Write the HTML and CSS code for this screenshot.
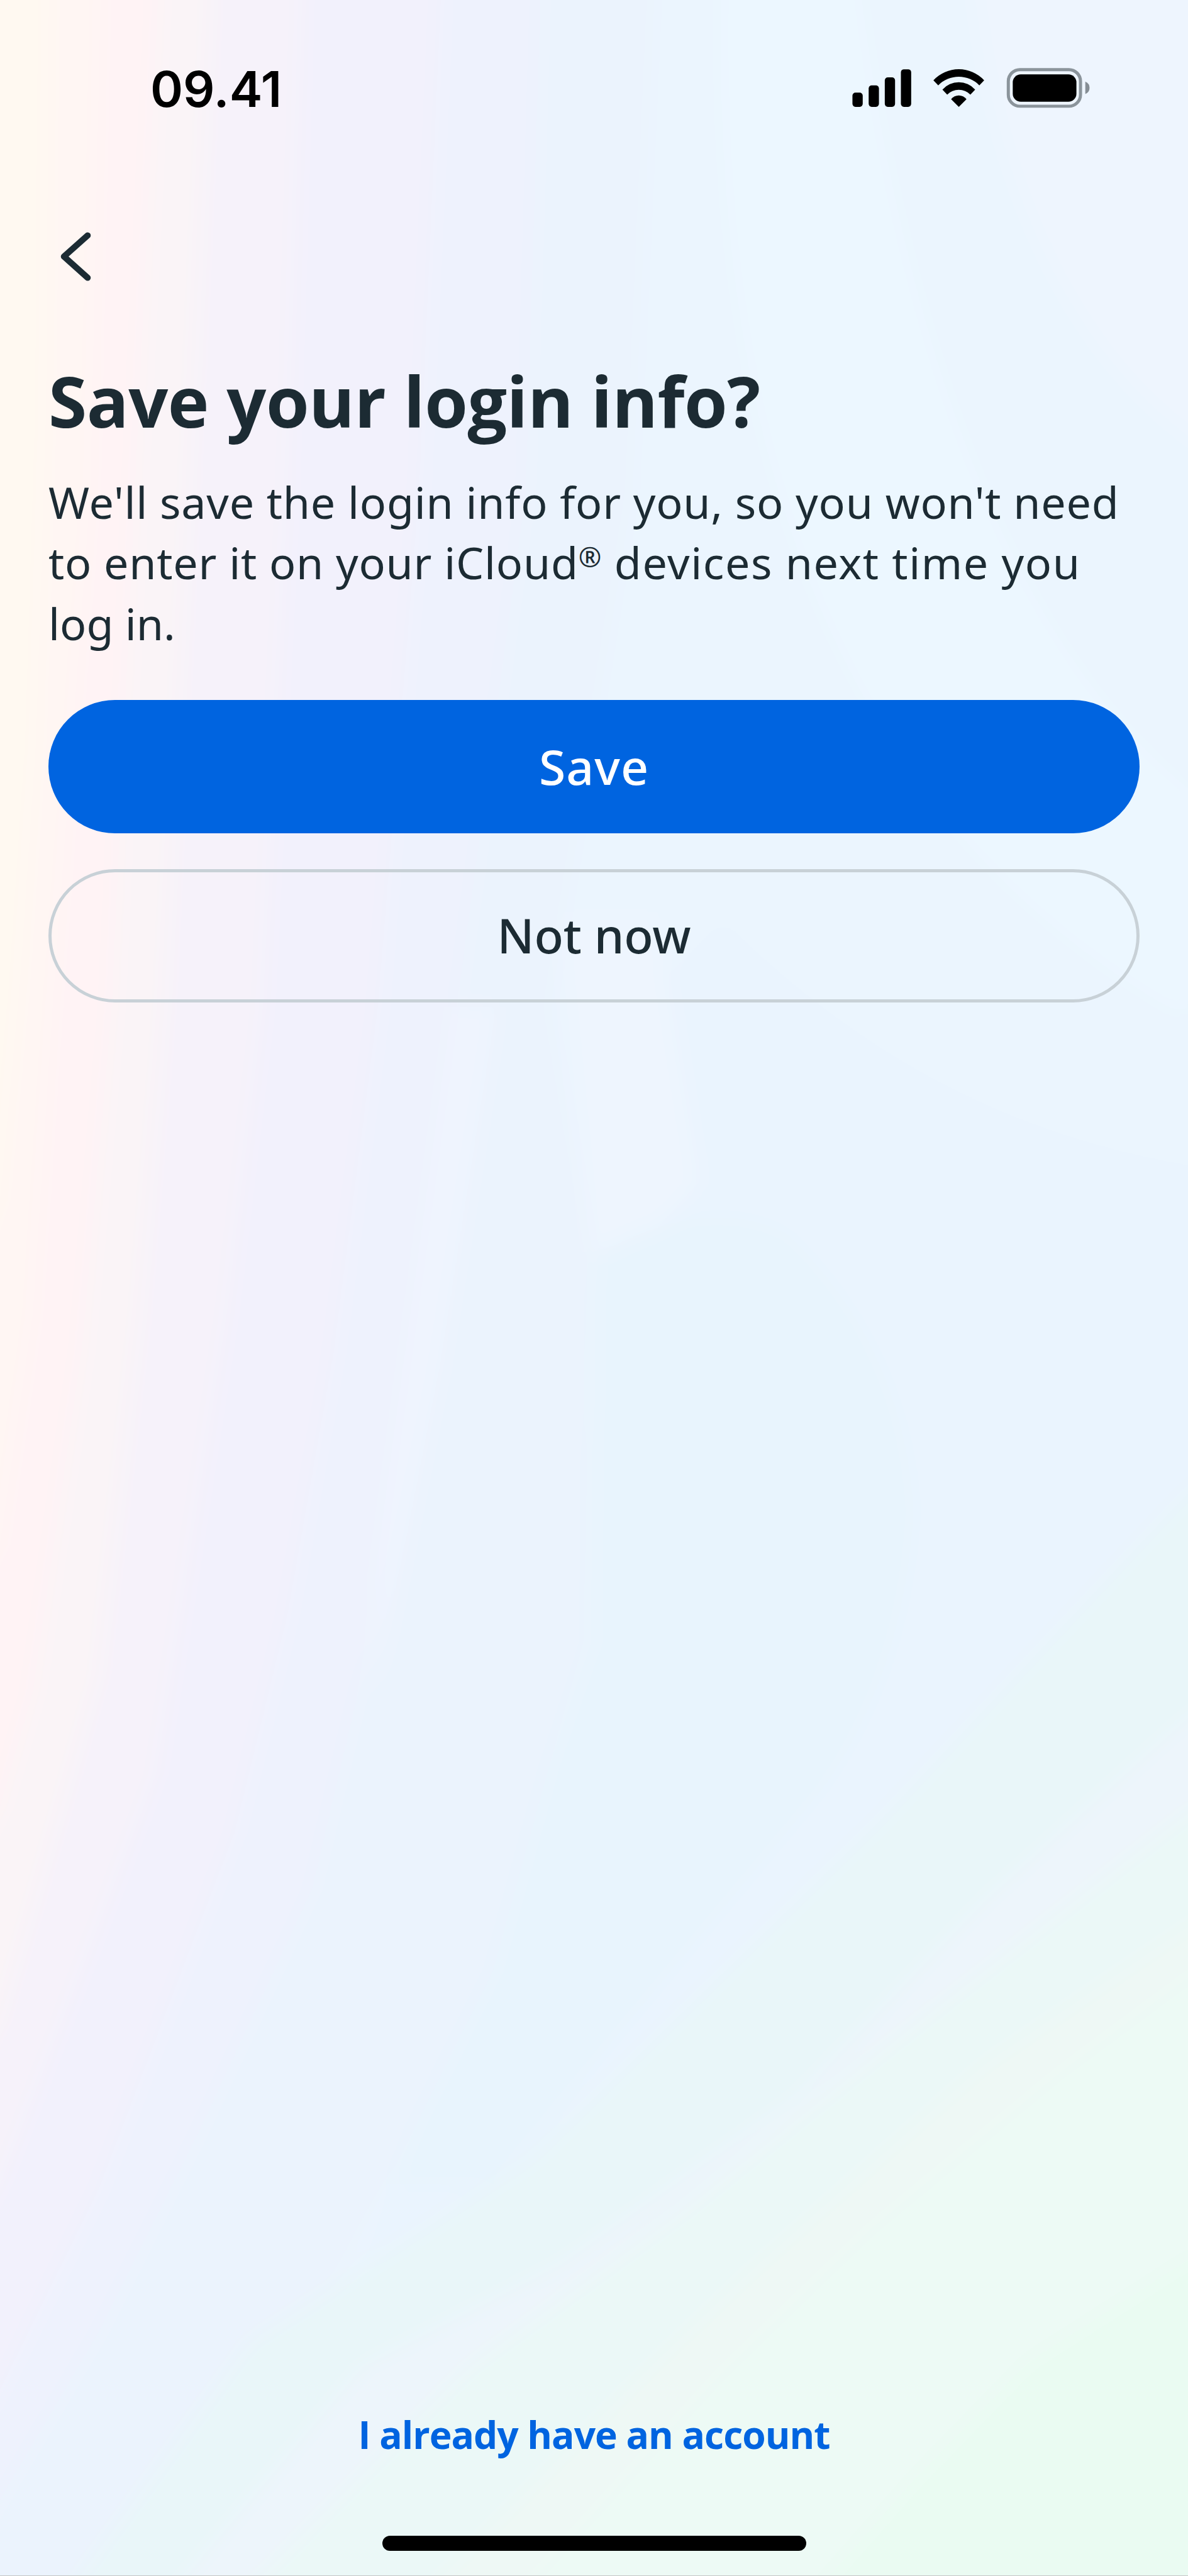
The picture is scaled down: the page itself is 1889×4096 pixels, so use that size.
FILE: index.html
```html
<!DOCTYPE html>
<html lang="en">
<head>
<meta charset="utf-8">
<title>Save your login info?</title>
<link rel="stylesheet" href="styles.css">
</head>
<body>
<div class="screen">
  <svg class="backdrop" viewBox="0 0 723 1568" preserveAspectRatio="none" aria-hidden="true">
    <defs>
      <filter id="soft" filterUnits="userSpaceOnUse" x="-40" y="-40" width="803" height="1648" color-interpolation-filters="sRGB"><feGaussianBlur stdDeviation="7"/></filter>
    </defs>
    <rect width="723" height="1568" fill="#ebf5fe"/>
    <g filter="url(#soft)">
      <rect x="-40" y="-40" width="803" height="1648" fill="#ebf5fe"/>
      <!-- pale blue field on the right -->
      <path d="M590 -40C600 120 660 240 763 290V-40Z" fill="#eef5fe"/>
      <path d="M440 -40C430 200 470 480 723 620V480C600 380 540 160 520 -40Z" fill="#ecf7ff"/>
      <path d="M440 560C520 640 620 700 763 715V960L500 1160L200 1450L340 1000L400 600Z" fill="#eaf4fe"/>
      <path d="M340 560H400L425 720L362 790Z" fill="#eef5fe"/>
      <path d="M362 765Q430 725 480 752Q550 820 556 920Q550 1020 500 1090L300 1330L240 1330L362 1000Z" fill="#e8f4fd"/>
      <!-- lavender to cream, right to left -->
      <path d="M-40 -40H400L385 300L335 613L360 760L355 1000L300 1200L200 1400L90 1608H-40Z" fill="#ebf3fd"/>
      <path d="M-40 -40H330L320 300L278 613L250 820L225 1000L190 1150L120 1300L60 1420L-40 1590Z" fill="#eef2fd"/>
      <path d="M275 613L302 613L268 830L228 1035L228 960Z" fill="#eff4fe"/>
      <path d="M-40 -40H270L255 300L230 613L203 824L175 983L143 1115L111 1199L60 1333L0 1455L-40 1520Z" fill="#f2f1fc"/>
      <path d="M-40 -40H185L175 300L160 613L138 800L95 1080L0 1330L-40 1400Z" fill="#f6f2fa"/>
      <path d="M-40 -40H130L115 300L100 613L85 800L60 1020L0 1230L-40 1310Z" fill="#faf4f7"/>
      <path d="M-40 -40H98L82 300L68 613L50 820L20 1030L0 1100L-40 1180Z" fill="#fff3f5"/>
      <path d="M-40 -40H62L55 300L32 613L20 800L0 940L-40 1020Z" fill="#fff6f3"/>
      <path d="M-40 -40H30L28 250L22 450L12 600L0 730L-40 850Z" fill="#fff9f1"/>
      <!-- mint bands in the lower right corner -->
      <path d="M763 880L723 909L535 1109L323 1315L152 1426L20 1608H763Z" fill="#e9f6f9"/>
      <path d="M763 1020L723 1046L600 1157L484 1278L341 1379L221 1441L80 1608H763Z" fill="#edf5fb"/>
      <path d="M763 1080L723 1104L553 1236L415 1347L286 1441L120 1608H763Z" fill="#ebf8f7"/>
      <path d="M763 1150L723 1173L599 1257L461 1379L396 1441L230 1608H763Z" fill="#eef8f5"/>
      <path d="M763 1180L723 1204L645 1262L530 1357L438 1446L290 1608H763Z" fill="#edfaf5"/>
      <path d="M763 1360L723 1376L626 1438L557 1509L470 1608H763Z" fill="#eafbf2"/>
    </g>
  </svg>
  <header class="status">
    <span class="clock">09.41</span>
    <svg class="status-icons" viewBox="1690 130 476 90" aria-hidden="true">
      <rect x="1691.8" y="184" width="20.4" height="28.3" rx="6"/>
      <rect x="1724" y="169.7" width="20.4" height="42.6" rx="6"/>
      <rect x="1756" y="153.7" width="20.4" height="58.6" rx="6"/>
      <rect x="1788" y="137.7" width="20.4" height="74.6" rx="6"/>
      <path d="M1852.5 159.7A68.5 68.5 0 0 1 1953.3 159.7L1943.7 169.5A57.7 57.7 0 0 0 1862.1 169.5Z"/>
      <path d="M1870.4 178A43.5 43.5 0 0 1 1935.4 178L1925.9 188A32.6 32.6 0 0 0 1879.9 188Z"/>
      <path d="M1887.6 197A19.5 19.5 0 0 1 1918.2 197L1902.9 212.3Z"/>
      <rect x="2001.2" y="138.4" width="143.3" height="72.6" rx="23" fill="none" stroke="#8b949b" stroke-width="6.2"/>
      <rect x="2010" y="147.7" width="126.4" height="54.5" rx="16"/>
      <path d="M2154 162.3Q2162.5 166 2162.5 174.5T2154 186.7Z" fill="#858d94"/>
    </svg>
  </header>
  <nav class="nav">
    <svg class="back" viewBox="120 460 66 100" aria-label="Back"><path d="M174 468L127 509.8L174 552" fill="none" stroke="#1c2b33" stroke-width="12.4" stroke-linecap="round" stroke-linejoin="round"/></svg>
  </nav>
  <main class="content">
    <h1 class="title">Save your login info?</h1>
    <p class="copy">We'll save the login info for you, so you won't need<br>to enter it on your iCloud<span class="reg">®</span><span class="wide"> devices next time you</span><br><span class="tight">log in.</span></p>
    <button class="btn primary">Save</button>
    <button class="btn secondary">Not now</button>
  </main>
  <footer class="footer">
    <a class="link">I already have an account</a>
    <div class="home"></div>
  </footer>
</div>
</body>
</html>
```
FILE: styles.css
```css
* {
  box-sizing: border-box;
}

body {
  margin: 0;
  color: #1c2b33;
  font-family: "Noto Sans", "Open Sans", sans-serif;
}

.screen {
  position: relative;
  z-index: 0;
  display: flex;
  flex-direction: column;
  width: 1889px;
  height: 4096px;
  overflow: hidden;
  border-bottom: 1px solid #c4c6c6;
}

.backdrop {
  position: absolute;
  inset: 0;
  z-index: -1;
  width: 100%;
  height: 100%;
}

.status {
  display: flex;
  justify-content: space-between;
  align-items: flex-start;
  height: 360px;
  padding: 104px 154px 0 239px;
}

.clock {
  color: #000;
  font-family: Inter, "Liberation Sans", sans-serif;
  font-size: 79px;
  font-weight: 600;
  line-height: 74px;
}

.status-icons {
  width: 381.3px;
  height: 72.1px;
}

.nav {
  height: 215px;
  padding: 8px 96px;
}

.back {
  display: block;
  width: 53px;
  height: 80px;
}

.content {
  display: flex;
  flex-direction: column;
  padding: 0 77px;
}

.title {
  margin: 0;
  font-family: "Open Sans", "Noto Sans", sans-serif;
  font-size: 111px;
  font-weight: 700;
  line-height: 124px;
  letter-spacing: -0.5px;
  white-space: nowrap;
}

.copy {
  height: 290px;
  margin: 51px 0 73px;
  font-size: 70px;
  line-height: 96.4px;
  letter-spacing: 0.75px;
  white-space: nowrap;
}

.wide {
  letter-spacing: 1.55px;
}

.tight {
  letter-spacing: 0;
}

.reg {
  font-size: 44px;
  line-height: 0;
  vertical-align: 19px;
}

.btn {
  height: 212px;
  padding: 0 0 2px;
  border: 0;
  border-radius: 106px;
  font: 500 76px/1 "Noto Sans", sans-serif;
}

.primary {
  background: #0064e0;
  color: #fff;
  font-size: 77px;
  letter-spacing: 1px;
}

.secondary {
  margin-top: 57px;
  border: 5px solid #c8d1d7;
  background: transparent;
  color: #1c2b33;
}

.footer {
  display: flex;
  flex-direction: column;
  align-items: center;
  margin-top: auto;
  padding-bottom: 39px;
}

.link {
  color: #0064e0;
  font-family: "Open Sans", "Noto Sans", sans-serif;
  font-size: 60.5px;
  font-weight: 700;
  line-height: 80px;
  letter-spacing: -1px;
}

.home {
  width: 674px;
  height: 24px;
  margin-top: 121px;
  border-radius: 12px;
  background: #000;
}
```
